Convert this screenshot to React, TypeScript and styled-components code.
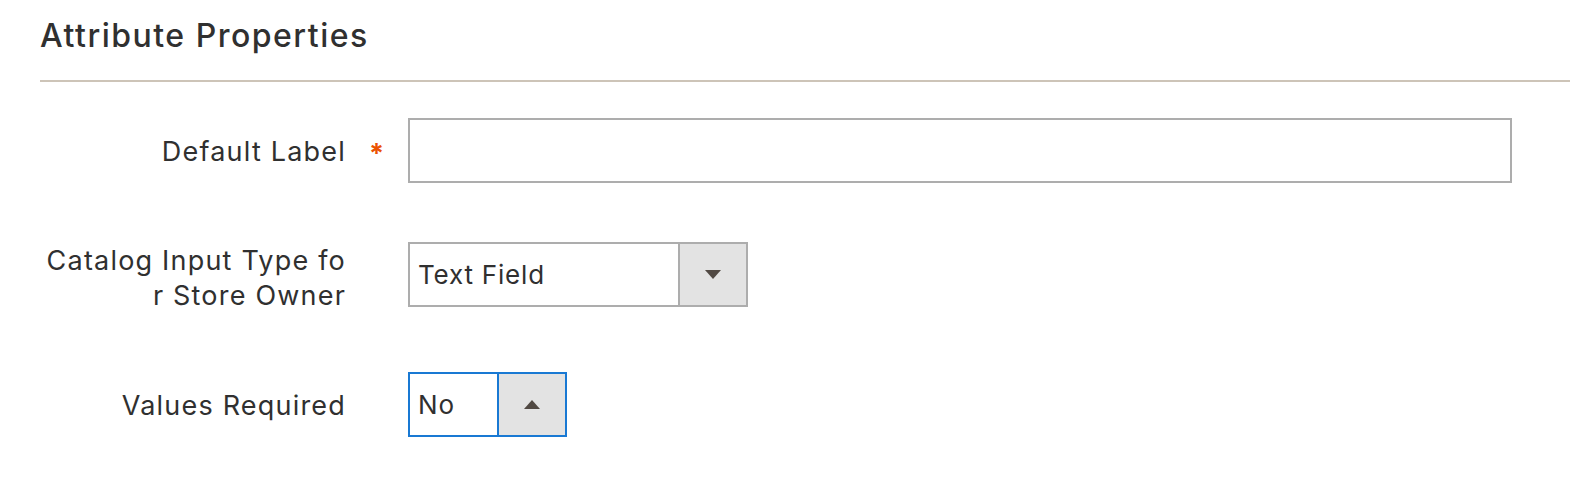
import styled, { createGlobalStyle } from "styled-components";

const GlobalStyle = createGlobalStyle`
  html, body {
    margin: 0;
    padding: 0;
    background: #ffffff;
  }
  body {
    font-family: Inter, "Open Sans", sans-serif;
    color: #303030;
  }
`;

const Page = styled.div`
  width: 1570px;
  height: 492px;
  padding-left: 40px;
  box-sizing: border-box;
  overflow: hidden;
`;

const Title = styled.h2`
  margin: 0;
  height: 82px;
  box-sizing: border-box;
  padding-top: 18px;
  font-size: 32px;
  line-height: 36px;
  letter-spacing: 1.5px;
  font-weight: 500;
  color: #303030;
  border-bottom: 2px solid #cdc4b8;
`;

const Fieldset = styled.div`
  padding-top: 36px;
  padding-right: 58px;
  display: flex;
  flex-direction: column;
  gap: 59px;
`;

const Row = styled.div`
  display: grid;
  grid-template-columns: 306px 62px 1fr;
  align-items: start;
`;

const Label = styled.label<{ $top: number }>`
  padding-top: ${(p) => p.$top}px;
  text-align: right;
  font-size: 27px;
  line-height: 35px;
  letter-spacing: 1.2px;
  color: #303030;
  white-space: nowrap;
`;

const Required = styled.span`
  padding: 18px 0 0 23px;
  font-size: 27px;
  line-height: 35px;
  color: #eb5202;
  font-weight: 700;
`;

const TextInput = styled.input`
  width: 100%;
  height: 65px;
  box-sizing: border-box;
  border: 2px solid #adadad;
  background: #ffffff;
  outline: none;
  padding: 0 10px;
  font: inherit;
  font-size: 26px;
`;

const Select = styled.div<{ $width: number; $focused?: boolean }>`
  display: flex;
  width: ${(p) => p.$width}px;
  height: 65px;
  box-sizing: border-box;
  border: 2px solid ${(p) => (p.$focused ? "#1979d3" : "#adadad")};
  background: #ffffff;
`;

const SelectValue = styled.div`
  flex: 1;
  display: flex;
  align-items: center;
  padding-left: 8px;
  font-size: 26px;
  letter-spacing: 0.8px;
  color: #303030;
`;

const SelectButton = styled.div<{ $focused?: boolean }>`
  width: 66px;
  display: flex;
  align-items: center;
  justify-content: center;
  background: #e3e3e3;
  border-left: 2px solid ${(p) => (p.$focused ? "#1979d3" : "#adadad")};
`;

const Arrow = styled.span<{ $up?: boolean }>`
  width: 0;
  height: 0;
  border-left: 8px solid transparent;
  border-right: 8px solid transparent;
  ${(p) =>
    p.$up
      ? "border-bottom: 9px solid #514943;"
      : "border-top: 9px solid #514943;"}
`;

export default function App() {
  return (
    <>
      <GlobalStyle />
      <Page>
        <Title>Attribute Properties</Title>
        <Fieldset>
          <Row>
            <Label $top={16}>Default Label</Label>
            <Required>*</Required>
            <TextInput type="text" />
          </Row>
          <Row>
            <Label $top={1}>
              Catalog Input Type fo
              <br />r Store Owner
            </Label>
            <span />
            <Select $width={340}>
              <SelectValue>Text Field</SelectValue>
              <SelectButton>
                <Arrow />
              </SelectButton>
            </Select>
          </Row>
          <Row>
            <Label $top={16}>Values Required</Label>
            <span />
            <Select $width={159} $focused>
              <SelectValue>No</SelectValue>
              <SelectButton $focused>
                <Arrow $up />
              </SelectButton>
            </Select>
          </Row>
        </Fieldset>
      </Page>
    </>
  );
}
